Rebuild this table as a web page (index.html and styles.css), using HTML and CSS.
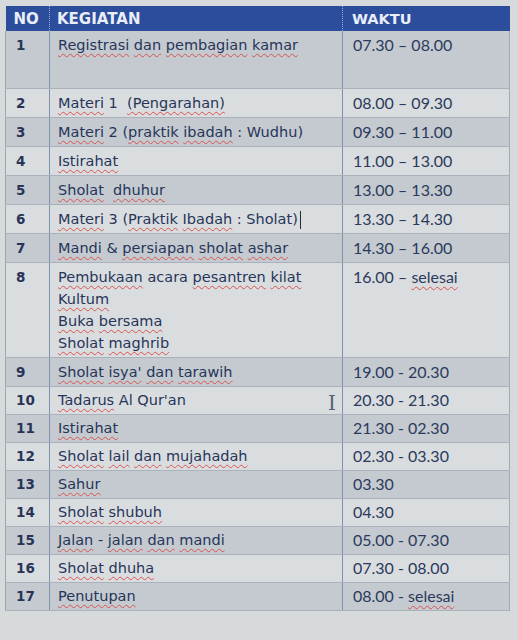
FILE: index.html
```html
<!DOCTYPE html>
<html>
<head>
<meta charset="utf-8">
<link rel="stylesheet" href="styles.css">
</head>
<body>
<div class="wrap">
<table class="sched">
<colgroup><col class="c-no"><col class="c-keg"><col class="c-wak"></colgroup>
<thead>
<tr><th class="h-no">NO</th><th class="h-keg">KEGIATAN</th><th class="h-wak">WAKTU</th></tr>
</thead>
<tbody>
<tr class="dark tall"><td class="no">1</td><td class="keg"><span class="sp">Registrasi</span> <span class="sp">dan</span> <span class="sp">pembagian</span> <span class="sp">kamar</span></td><td class="wak">07.30 – 08.00</td></tr>
<tr class="light"><td class="no">2</td><td class="keg"><span class="sp">Materi</span> 1&nbsp; <span class="sp">(Pengarahan)</span></td><td class="wak">08.00 – 09.30</td></tr>
<tr class="dark"><td class="no">3</td><td class="keg"><span class="sp">Materi</span> 2 (<span class="sp">praktik</span> <span class="sp">ibadah</span> : Wudhu)</td><td class="wak">09.30 – 11.00</td></tr>
<tr class="light"><td class="no">4</td><td class="keg"><span class="sp">Istirahat</span></td><td class="wak">11.00 – 13.00</td></tr>
<tr class="dark"><td class="no">5</td><td class="keg"><span class="sp">Sholat</span>&nbsp; <span class="sp">dhuhur</span></td><td class="wak">13.00 – 13.30</td></tr>
<tr class="light"><td class="no">6</td><td class="keg"><span class="sp">Materi</span> 3 (<span class="sp">Praktik</span> <span class="sp">Ibadah</span> : Sholat)<span class="caret"></span></td><td class="wak">13.30 – 14.30</td></tr>
<tr class="dark"><td class="no">7</td><td class="keg"><span class="sp">Mandi</span> &amp; <span class="sp">persiapan</span> <span class="sp">sholat</span> <span class="sp">ashar</span></td><td class="wak">14.30 – 16.00</td></tr>
<tr class="light"><td class="no">8</td><td class="keg"><span class="sp">Pembukaan</span> acara <span class="sp">pesantren</span> <span class="sp">kilat</span><br><span class="sp">Kultum</span><br><span class="sp">Buka</span> <span class="sp">bersama</span><br><span class="sp">Sholat</span> <span class="sp">maghrib</span></td><td class="wak">16.00 – <span class="sp">selesai</span></td></tr>
<tr class="dark"><td class="no">9</td><td class="keg"><span class="sp">Sholat</span> <span class="sp">isya'</span> <span class="sp">dan</span> <span class="sp">tarawih</span></td><td class="wak">19.00 - 20.30</td></tr>
<tr class="light short"><td class="no">10</td><td class="keg beam-cell"><span class="sp">Tadarus</span> Al Qur'an<span class="ibeam">I</span></td><td class="wak">20.30 - 21.30</td></tr>
<tr class="dark short"><td class="no">11</td><td class="keg"><span class="sp">Istirahat</span></td><td class="wak">21.30 - 02.30</td></tr>
<tr class="light short"><td class="no">12</td><td class="keg"><span class="sp">Sholat</span> <span class="sp">lail</span> <span class="sp">dan</span> <span class="sp">mujahadah</span></td><td class="wak">02.30 - 03.30</td></tr>
<tr class="dark short"><td class="no">13</td><td class="keg"><span class="sp">Sahur</span></td><td class="wak">03.30</td></tr>
<tr class="light short"><td class="no">14</td><td class="keg"><span class="sp">Sholat</span> <span class="sp">shubuh</span></td><td class="wak">04.30</td></tr>
<tr class="dark short"><td class="no">15</td><td class="keg"><span class="sp">Jalan</span> - <span class="sp">jalan</span> <span class="sp">dan</span> <span class="sp">mandi</span></td><td class="wak">05.00 - 07.30</td></tr>
<tr class="light short"><td class="no">16</td><td class="keg"><span class="sp">Sholat</span> <span class="sp">dhuha</span></td><td class="wak">07.30 - 08.00</td></tr>
<tr class="dark short"><td class="no">17</td><td class="keg"><span class="sp">Penutupan</span></td><td class="wak">08.00 - <span class="sp">selesai</span></td></tr>
</tbody>
</table>
</div>
</body>
</html>
```
FILE: styles.css
```css
html, body {
  margin: 0;
  padding: 0;
}
body {
  background: #d7dada;
  width: 518px;
  height: 640px;
  overflow: hidden;
}
.wrap {
  padding: 6px 0 0 5px;
}
.sched {
  border-collapse: collapse;
  table-layout: fixed;
  width: 504px;
  color: #26324f;
}
.c-no { width: 44px; }
.c-keg { width: 293px; }
.c-wak { width: 167px; }

.sched th {
  background: #2c4c9c;
  color: #e9eef8;
  font-family: "DejaVu Sans", sans-serif;
  font-weight: bold;
  font-size: 15px;
  text-align: left;
  height: 25px;
  padding: 0;
  vertical-align: middle;
  border-right: 1px dotted #9fb2de;
}
.sched th:last-child { border-right: none; }
.h-no { padding-left: 8px !important; }
.h-keg { padding-left: 7px !important; }
.h-wak { padding-left: 9px !important; font-size: 14.5px !important; }

.sched td {
  padding: 3px 0 3px 0;
  vertical-align: top;
  height: 22px;
  line-height: 22px;
  border-bottom: 1px solid #a9b2ba;
  border-right: 1px solid #7f91aa;
}
.sched td:first-child { border-left: 1px solid #9aa6b2; }
.sched td:last-child { border-right: 1px solid #a3acb4; }

.dark td { background: #c4cad0; }
.light td { background: #dadddf; }
.tall td { height: 51px; }
.short td { height: 21px; padding-top: 2px; }

.no {
  font-family: "DejaVu Sans", sans-serif;
  font-weight: bold;
  font-size: 13.5px;
  padding-left: 10px !important;
  color: #283457;
}
.keg {
  font-family: "DejaVu Sans", sans-serif;
  font-size: 14.5px;
  padding-left: 8px !important;
  white-space: nowrap;
  color: #27355a;
}
.wak {
  font-family: "Lato", sans-serif;
  font-size: 16px;
  padding-left: 10px !important;
  color: #2b3a5c;
  white-space: nowrap;
}
.sp {
  text-decoration: underline wavy #d9534f;
  text-decoration-thickness: 1px;
  text-underline-offset: 3px;
}
.caret {
  display: inline-block;
  width: 1px;
  height: 18px;
  background: #2a2a2a;
  vertical-align: middle;
  margin-left: 2px;
}
.beam-cell { position: relative; }
.ibeam {
  position: absolute;
  right: 6px;
  top: 6px;
  font-family: "DejaVu Serif", serif;
  font-size: 20px;
  line-height: 20px;
  color: #5a6070;
}
```
